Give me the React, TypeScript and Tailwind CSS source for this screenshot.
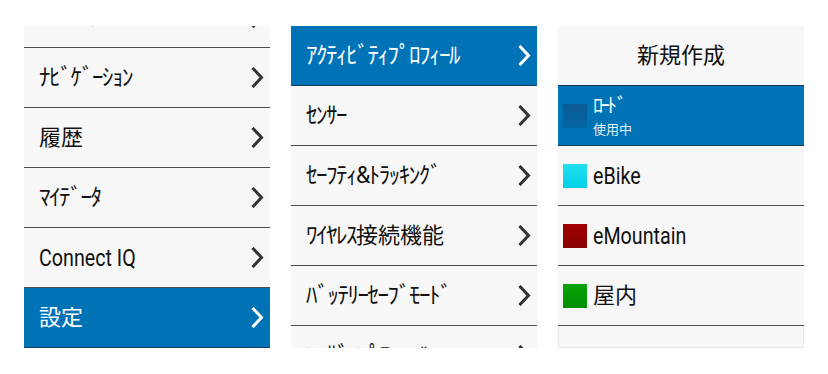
import React from "react";

const BLUE = "bg-[#0073b7]";

// half-width kana is drawn tall and tightly packed, kanji at normal size
function JText({ text, small }: { text: string; small?: boolean }) {
  const parts = text.match(/[\uFF61-\uFF9F&]+|[^\uFF61-\uFF9F&]+/g) ?? [];
  return (
    <span className="whitespace-nowrap leading-none">
      {parts.map((p, i) =>
        /[\uFF61-\uFF9F&]/.test(p) ? (
          <span key={i} className={small ? "text-[20px] tracking-[-3px]" : "text-[23px] tracking-[-1.5px]"}>
            {p}
          </span>
        ) : (
          <span key={i} className="text-[22px]">
            {p}
          </span>
        )
      )}
    </span>
  );
}

function Chevron({ light }: { light?: boolean }) {
  return (
    <svg width="13" height="21" viewBox="0 0 13 21" className="shrink-0">
      <path
        d="M2.5 2 L10.5 10.5 L2.5 19"
        fill="none"
        stroke={light ? "#ffffff" : "#333333"}
        strokeWidth="3"
        strokeLinecap="square"
      />
    </svg>
  );
}

type Item = { label: string; latin?: boolean; active?: boolean };

function MenuRow({ label, latin, active }: Item) {
  return (
    <div
      className={`flex h-[60px] items-center justify-between border-b pl-[15px] pr-[6px] ${
        active ? `${BLUE} border-[#163a5c] text-white` : "border-[#4d4d4d] text-[#111]"
      }`}
    >
      {latin ? (
        <span className="inline-block origin-left scale-x-[0.82] whitespace-nowrap text-[24px] leading-none">
          {label}
        </span>
      ) : (
        <JText text={label} />
      )}
      <Chevron light={active} />
    </div>
  );
}

const mainMenu: Item[] = [
  { label: "ﾄﾚｰﾆﾝｸﾞ" },
  { label: "ﾅﾋﾞｹﾞｰｼｮﾝ" },
  { label: "履歴" },
  { label: "ﾏｲﾃﾞｰﾀ" },
  { label: "Connect IQ", latin: true },
  { label: "設定", active: true },
];

const settings: Item[] = [
  { label: "ｱｸﾃｨﾋﾞﾃｨﾌﾟﾛﾌｨｰﾙ", active: true },
  { label: "ｾﾝｻｰ" },
  { label: "ｾｰﾌﾃｨ&ﾄﾗｯｷﾝｸﾞ" },
  { label: "ﾜｲﾔﾚｽ接続機能" },
  { label: "ﾊﾞｯﾃﾘｰｾｰﾌﾞﾓｰﾄﾞ" },
  { label: "ﾕｰｻﾞｰﾌﾟﾛﾌｨｰﾙ" },
];

const profiles = [
  { label: "eBike", latin: true, swatch: "from-[#20e0f2] to-[#00cfe6]" },
  { label: "eMountain", latin: true, swatch: "from-[#a00000] to-[#880000]" },
  { label: "屋内", latin: false, swatch: "from-[#0aa30a] to-[#008f00]" },
];

export default function App() {
  return (
    <div className="flex min-h-[374px] gap-[21px] bg-white pl-[24px] pt-[26px] font-['Roboto','Noto_Sans_CJK_JP',sans-serif]">
      {/* main menu, scrolled */}
      <div className="h-[322px] w-[246px] overflow-hidden bg-[#f7f7f7]">
        <div className="-mt-[38px]">
          {mainMenu.map((m) => (
            <MenuRow key={m.label} {...m} />
          ))}
        </div>
      </div>

      {/* settings */}
      <div className="h-[322px] w-[246px] overflow-hidden bg-[#f7f7f7]">
        {settings.map((m) => (
          <MenuRow key={m.label} {...m} />
        ))}
      </div>

      {/* activity profiles */}
      <div className="flex h-[322px] w-[246px] flex-col overflow-hidden bg-[#f7f7f7]">
        <div className="flex h-[60px] shrink-0 items-center justify-center border-b border-[#163a5c] text-[#111]">
          <JText text="新規作成" />
        </div>
        <div className={`flex h-[60px] shrink-0 items-center gap-[6px] border-b border-[#163a5c] pl-[5px] ${BLUE}`}>
          <div className="size-[24px] bg-linear-to-b from-[#0a5a93] to-[#0466a6]" />
          <div className="flex flex-col gap-[7px] text-white">
            <JText text="ﾛｰﾄﾞ" small />
            <span className="text-[13px] leading-none text-[#e6f0f8]">使用中</span>
          </div>
        </div>
        {profiles.map((p) => (
          <div
            key={p.label}
            className="flex h-[60px] shrink-0 items-center gap-[6px] border-b border-[#4d4d4d] pl-[5px] text-[#111]"
          >
            <div className={`size-[24px] bg-linear-to-b ${p.swatch}`} />
            {p.latin ? (
              <span className="inline-block origin-left scale-x-[0.82] text-[24px] leading-none">{p.label}</span>
            ) : (
              <JText text={p.label} />
            )}
          </div>
        ))}
        <div className="flex-1 border-x border-b border-[#e6e6e6]" />
      </div>
    </div>
  );
}
